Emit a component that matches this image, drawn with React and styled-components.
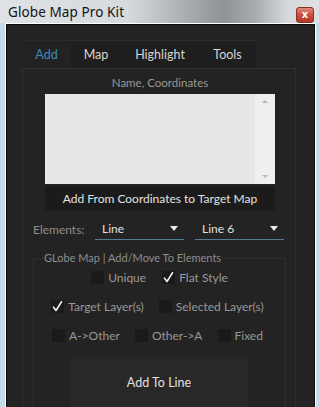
import React from 'react';
import styled, { createGlobalStyle } from 'styled-components';

const Global = createGlobalStyle`
  html, body { margin: 0; padding: 0; }
  body {
    width: 319px;
    height: 407px;
    overflow: hidden;
    background: #c6dbe8;
    font-family: Lato, "Noto Sans", sans-serif;
  }
`;

const Window = styled.div`
  width: 319px;
  height: 407px;
  display: flex;
  flex-direction: column;
  overflow: hidden;
`;

const TitleBar = styled.div`
  height: 23px;
  flex: none;
  display: flex;
  align-items: center;
  padding: 0 5px 0 8px;
  background: linear-gradient(90deg, #dfe2e5 0%, #d7dadd 40%, #a9aeb2 58%, #8e9398 70%, #a7acb0 80%, #d5d9dc 90%, #dde1e4 100%);
`;

const Title = styled.span`
  font-family: "Noto Sans", sans-serif;
  font-size: 13.5px;
  color: #141414;
  letter-spacing: 0.1px;
`;

const CloseButton = styled.div`
  margin-left: auto;
  margin-top: 6px;
  width: 16px;
  height: 14px;
  border: 1px solid #8d3024;
  border-radius: 3px;
  background: linear-gradient(180deg, #e2887a 0%, #c9503f 50%, #b73827 100%);
  color: #fff;
  font-size: 10px;
  font-weight: bold;
  font-family: "DejaVu Sans", sans-serif;
  display: flex;
  align-items: center;
  justify-content: center;
  line-height: 1;
`;

const Frame = styled.div`
  flex: 1;
  margin: 0 3px 0 5px;
  border: 1px solid #ffffff;
  border-bottom: none;
  display: flex;
  min-height: 0;
`;

const Dark = styled.div`
  flex: 1;
  border: 1px solid #0c0c0c;
  border-bottom: none;
  background: #242323;
  padding: 15px 0 0 15px;
  display: flex;
  flex-direction: column;
  min-height: 0;
`;

const TabBar = styled.div`
  display: flex;
  width: 234px;
  height: 27px;
  background: #1f1e1e;
  border-top: 1px solid #2c2b2b;
`;

const Tab = styled.div`
  width: ${({ w }) => w}px;
  display: flex;
  align-items: center;
  justify-content: center;
  font-size: 12.5px;
  color: ${({ active }) => (active ? '#3d8cb8' : '#d6d6d6')};
  background: ${({ active }) => (active ? '#232222' : 'transparent')};
`;

const Content = styled.div`
  flex: 1;
  width: 274px;
  border: 1px solid #2f2e2e;
  border-bottom: none;
  background: #242323;
  display: flex;
  flex-direction: column;
  padding: 0 0 0 10px;
  box-sizing: border-box;
`;

const Caption = styled.div`
  width: 254px;
  text-align: center;
  font-size: 11.5px;
  color: #979797;
  margin-top: 5px;
  height: 20px;
  line-height: 18px;
`;

const TextBox = styled.div`
  margin-left: 12px;
  width: 230px;
  height: 90px;
  background: #e8e6e9;
  display: flex;
  justify-content: flex-end;
`;

const ScrollBar = styled.div`
  width: 20px;
  background: #efeef0;
  display: flex;
  flex-direction: column;
  justify-content: space-between;
  align-items: center;
  padding: 6px 0;
  box-sizing: border-box;
`;

const Arrow = styled.div`
  width: 0;
  height: 0;
  border-left: 3px solid transparent;
  border-right: 3px solid transparent;
  ${({ up }) => (up ? 'border-bottom: 3px solid #b9b9bb;' : 'border-top: 3px solid #b9b9bb;')}
`;

const WideButton = styled.div`
  margin: 2px 0 0 12px;
  width: 230px;
  height: 24px;
  background: #1c1b1b;
  color: #e2e2e2;
  font-size: 12px;
  display: flex;
  align-items: center;
  justify-content: center;
`;

const ElementsRow = styled.div`
  display: flex;
  align-items: center;
  margin-top: 7px;
  height: 24px;
`;

const Label = styled.span`
  font-size: 12px;
  color: #8e8e8e;
  width: 62px;
`;

const Select = styled.div`
  width: 89px;
  height: 22px;
  margin-right: 11px;
  border-bottom: 1px solid #4f7f92;
  display: flex;
  align-items: center;
  justify-content: space-between;
  padding: 0 6px 0 7px;
  box-sizing: border-box;
  font-size: 12px;
  color: #e0e0e0;
`;

const Caret = styled.div`
  width: 0;
  height: 0;
  border-left: 4px solid transparent;
  border-right: 4px solid transparent;
  border-top: 5px solid #e8e8e8;
`;

const Group = styled.fieldset`
  margin: 10px 0 0 0;
  width: 253px;
  box-sizing: border-box;
  border: 1px solid #302f2f;
  border-bottom: none;
  padding: 0;
  flex: 1;
  display: flex;
  flex-direction: column;
  align-items: center;
`;

const Legend = styled.legend`
  font-size: 11px;
  color: #8e8e8e;
  padding: 0;
  margin-left: 10px;
  line-height: 14px;
`;

const CheckRow = styled.div`
  display: flex;
  justify-content: center;
  gap: ${({ gap }) => gap}px;
  height: 18px;
  margin-top: ${({ top }) => top}px;
  width: 100%;
  padding-right: ${({ shift }) => shift || 0}px;
  box-sizing: border-box;
`;

const Check = styled.div`
  display: flex;
  align-items: center;
  gap: 4px;
  font-size: 12px;
  color: #989898;
`;

const Box = styled.div`
  width: 13px;
  height: 13px;
  background: #1b1a1a;
  display: flex;
  align-items: center;
  justify-content: center;
`;

const BigButton = styled.div`
  margin-top: 13px;
  width: 177px;
  flex: 1;
  background: #292828;
  color: #e0e0e0;
  font-size: 12.5px;
  display: flex;
  justify-content: center;
  padding-top: 18px;
  box-sizing: border-box;
  margin-right: 1px;
`;

const Tick = () => (
  <svg width="13" height="13" viewBox="0 0 13 13">
    <path d="M2.5 7.2 L5 10.5 L10.5 1.8" fill="none" stroke="#f2f2f2" strokeWidth="1.6" strokeLinecap="round" strokeLinejoin="round" />
  </svg>
);

const CheckItem = ({ checked, children }) => (
  <Check>
    <Box>{checked && <Tick />}</Box>
    {children}
  </Check>
);

const tabs = [
  { name: 'Add', w: 49, active: true },
  { name: 'Map', w: 50 },
  { name: 'Highlight', w: 78 },
  { name: 'Tools', w: 57 },
];

export default function App() {
  return (
    <Window>
      <Global />
      <TitleBar>
        <Title>Globe Map Pro Kit</Title>
        <CloseButton>x</CloseButton>
      </TitleBar>
      <Frame>
        <Dark>
          <TabBar>
            {tabs.map((t) => (
              <Tab key={t.name} w={t.w} active={t.active}>
                {t.name}
              </Tab>
            ))}
          </TabBar>
          <Content>
            <Caption>Name, Coordinates</Caption>
            <TextBox>
              <ScrollBar>
                <Arrow up />
                <Arrow />
              </ScrollBar>
            </TextBox>
            <WideButton>Add From Coordinates to Target Map</WideButton>
            <ElementsRow>
              <Label>Elements:</Label>
              <Select>
                Line
                <Caret />
              </Select>
              <Select>
                Line 6
                <Caret />
              </Select>
            </ElementsRow>
            <Group>
              <Legend>GLobe Map | Add/Move To Elements</Legend>
              <CheckRow gap={16} top={3}>
                <CheckItem>Unique</CheckItem>
                <CheckItem checked>Flat Style</CheckItem>
              </CheckRow>
              <CheckRow gap={15} top={11} shift={4}>
                <CheckItem checked>Target Layer(s)</CheckItem>
                <CheckItem>Selected Layer(s)</CheckItem>
              </CheckRow>
              <CheckRow gap={15} top={11} shift={4}>
                <CheckItem>A-&gt;Other</CheckItem>
                <CheckItem>Other-&gt;A</CheckItem>
                <CheckItem>Fixed</CheckItem>
              </CheckRow>
              <BigButton>Add To Line</BigButton>
            </Group>
          </Content>
        </Dark>
      </Frame>
    </Window>
  );
}
